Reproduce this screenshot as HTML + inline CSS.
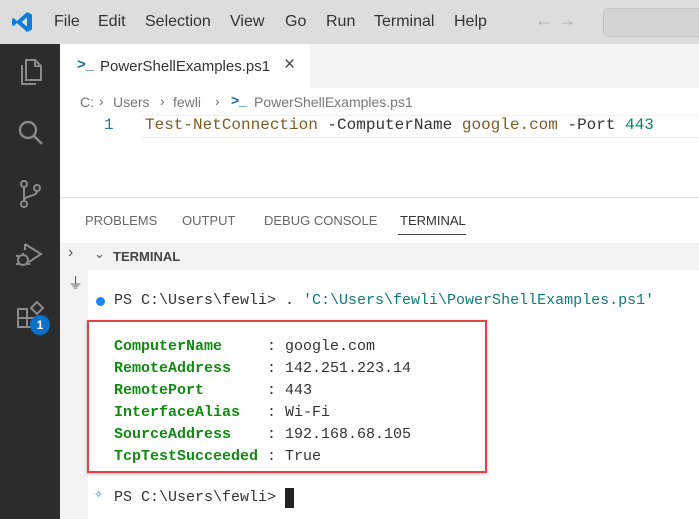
<!DOCTYPE html>
<html><head><style>
*{margin:0;padding:0;box-sizing:border-box}
body{width:699px;height:519px;overflow:hidden;position:relative;background:#fff;font-family:"Liberation Sans",sans-serif}
.a{position:absolute;white-space:pre}
.mono{font-family:"Liberation Mono",monospace}
</style></head><body>
<div class="a" style="left:0;top:0;width:699px;height:44px;background:#dddddd"></div>
<svg class="a" style="left:11px;top:11px" width="22" height="22" viewBox="0 0 22 22"><path d="M16 1 L21 3.5 V18.5 L16 21 L6 12 L2.5 15 L1 14 V8 L2.5 7 L6 10 Z M16 6.5 L10.5 11 L16 15.5 Z" fill="#0f7ddb" fill-rule="evenodd"/></svg>
<div class="a" style="left:54px;top:13px;font-size:16px;color:#333">File</div>
<div class="a" style="left:98px;top:13px;font-size:16px;color:#333">Edit</div>
<div class="a" style="left:145px;top:13px;font-size:16px;color:#333">Selection</div>
<div class="a" style="left:230px;top:13px;font-size:16px;color:#333">View</div>
<div class="a" style="left:285px;top:13px;font-size:16px;color:#333">Go</div>
<div class="a" style="left:326px;top:13px;font-size:16px;color:#333">Run</div>
<div class="a" style="left:374px;top:13px;font-size:16px;color:#333">Terminal</div>
<div class="a" style="left:454px;top:13px;font-size:16px;color:#333">Help</div>
<div class="a" style="left:535px;top:10px;font-size:18px;color:#aaa">← →</div>
<div class="a" style="left:603px;top:8px;width:110px;height:29px;background:#d4d4d4;border:1px solid #c4c4c4;border-radius:6px"></div>
<div class="a" style="left:0;top:44px;width:60px;height:475px;background:#2c2c2c"></div>
<svg class="a" style="left:15px;top:57px" width="30" height="30" viewBox="0 0 30 30" fill="none" stroke="#8a8a8a" stroke-width="2"><path d="M11 3h9l6 6v14h-15z M20 3v6h6 M7 8v19h14"/></svg>
<svg class="a" style="left:15px;top:118px" width="30" height="30" viewBox="0 0 30 30" fill="none" stroke="#8a8a8a" stroke-width="2.4"><circle cx="13" cy="12" r="8"/><path d="M19 18l8 8"/></svg>
<svg class="a" style="left:15px;top:178px" width="30" height="32" viewBox="0 0 30 32" fill="none" stroke="#8a8a8a" stroke-width="2"><circle cx="9" cy="6" r="3"/><circle cx="9" cy="26" r="3"/><circle cx="22" cy="10" r="3"/><path d="M9 9v14 M22 13c0 6-13 4-13 10"/></svg>
<svg class="a" style="left:13px;top:240px" width="32" height="32" viewBox="0 0 32 32" fill="none" stroke="#8a8a8a" stroke-width="2"><path d="M12 4l16 10-12 8 M12 4v6"/><circle cx="10" cy="20" r="5"/><path d="M3 16h3 M3 24h3 M14 24h3 M10 13v2"/></svg>
<svg class="a" style="left:15px;top:300px" width="30" height="30" viewBox="0 0 30 30" fill="none" stroke="#8a8a8a" stroke-width="2"><path d="M3 9h9v9H3z M3 18h9v9H3z M12 18h9v9h-9z M16 8l6-6 6 6-6 6z"/></svg>
<div class="a" style="left:30px;top:315px;width:20px;height:20px;border-radius:50%;background:#0a71c8;color:#fff;font-size:12px;font-weight:bold;text-align:center;line-height:20px">1</div>
<div class="a" style="left:60px;top:44px;width:639px;height:44px;background:#f3f3f3"></div>
<div class="a" style="left:60px;top:44px;width:250px;height:44px;background:#fff"></div>
<div class="a" style="left:77px;top:56px;font-size:15px;color:#1e6ba8;font-weight:bold">&gt;_</div>
<div class="a" style="left:100px;top:58px;font-size:15px;color:#333">PowerShellExamples.ps1</div>
<div class="a" style="left:284px;top:54px;font-size:19px;color:#444">×</div>
<div class="a" style="left:80px;top:94px;font-size:14px;color:#777">C:</div>
<div class="a" style="left:99px;top:93px;font-size:14px;color:#777">›</div>
<div class="a" style="left:113px;top:94px;font-size:14px;color:#777">Users</div>
<div class="a" style="left:160px;top:93px;font-size:14px;color:#777">›</div>
<div class="a" style="left:173px;top:94px;font-size:14px;color:#777">fewli</div>
<div class="a" style="left:215px;top:93px;font-size:14px;color:#777">›</div>
<div class="a" style="left:231px;top:92px;font-size:14px;color:#1e6ba8;font-weight:bold">&gt;_</div>
<div class="a" style="left:254px;top:94px;font-size:14px;color:#777">PowerShellExamples.ps1</div>
<div class="a" style="left:142px;top:115px;width:557px;height:23px;border-top:1px solid #eee;border-bottom:1px solid #eee"></div>
<div class="a mono" style="left:104px;top:116px;font-size:16px;color:#237893">1</div>
<div class="a mono" style="left:145px;top:116px;font-size:16px;color:#333"><span style="color:#795e26">Test-NetConnection</span> -ComputerName <span style="color:#795e26">google.com</span> -Port <span style="color:#098658">443</span></div>
<div class="a" style="left:60px;top:197px;width:639px;height:1px;background:#e0e0e0"></div>
<div class="a" style="left:85px;top:213px;font-size:13px;color:#666">PROBLEMS</div>
<div class="a" style="left:182px;top:213px;font-size:13px;color:#666">OUTPUT</div>
<div class="a" style="left:264px;top:213px;font-size:13px;color:#666">DEBUG CONSOLE</div>
<div class="a" style="left:400px;top:213px;font-size:13px;color:#333">TERMINAL</div>
<div class="a" style="left:398px;top:234px;width:68px;height:1px;background:#444"></div>
<div class="a" style="left:60px;top:243px;width:28px;height:276px;background:#f3f3f3"></div>
<div class="a" style="left:88px;top:243px;width:611px;height:27px;background:#f3f3f3"></div>
<div class="a" style="left:68px;top:244px;font-size:16px;color:#555">›</div>
<div class="a" style="left:68px;top:272px;font-size:15px;color:#555">⏚</div>
<div class="a" style="left:94px;top:246px;font-size:13px;color:#555">⌄</div>
<div class="a" style="left:113px;top:249px;font-size:13px;color:#444;font-weight:bold">TERMINAL</div>
<div class="a" style="left:96px;top:297px;width:9px;height:9px;border-radius:50%;background:#1a85ff"></div>
<div class="a mono" style="left:114px;top:292px;font-size:15px;color:#333">PS C:\Users\fewli&gt; . <span style="color:#0f7a7a">'C:\Users\fewli\PowerShellExamples.ps1'</span></div>
<div class="a" style="left:87px;top:320px;width:400px;height:153px;border:2px solid #e04545;box-shadow:0 1px 3px rgba(0,0,0,.3)"></div>
<div class="a mono" style="left:114px;top:336px;font-size:15px;line-height:22px;color:#333"><b style="color:#108a10">ComputerName    </b> : google.com
<b style="color:#108a10">RemoteAddress   </b> : 142.251.223.14
<b style="color:#108a10">RemotePort      </b> : 443
<b style="color:#108a10">InterfaceAlias  </b> : Wi-Fi
<b style="color:#108a10">SourceAddress   </b> : 192.168.68.105
<b style="color:#108a10">TcpTestSucceeded</b> : True</div>
<div class="a" style="left:94px;top:488px;font-size:11px;color:#1a85ff">✧</div>
<div class="a mono" style="left:114px;top:489px;font-size:15px;color:#333">PS C:\Users\fewli&gt;</div>
<div class="a" style="left:285px;top:488px;width:9px;height:20px;background:#222"></div>
</body></html>
